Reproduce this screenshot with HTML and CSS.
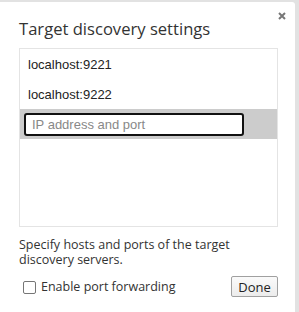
FILE: index.html
```html
<!DOCTYPE html>
<html>
<head>
    <title>Target discovery settings</title>
    <link rel="stylesheet" href="styles.css">
</head>
<body>
    <div class="dialog">
        <span class="close-btn">
            <svg width="8" height="8" viewBox="0 0 8 8"><path d="M1 1L7 7M7 1L1 7" stroke="#777" stroke-width="2"/></svg>
        </span>
        <h2 class="dialog-title">Target discovery settings</h2>

        <div class="host-list">
            <div class="host-item">localhost:9221</div>
            <div class="host-item">localhost:9222</div>
            <div class="host-item selected">
                <input type="text" class="host-input" placeholder="IP address and port">
            </div>
        </div>

        <p class="dialog-note">Specify hosts and ports of the target discovery servers.</p>

        <div class="dialog-footer">
            <label class="check-label"><span class="check-box"></span>Enable port forwarding</label>
            <button class="done-btn">Done</button>
        </div>
    </div>
</body>
</html>
```

FILE: styles.css
```css
body {
    margin: 0;
    padding: 0;
    background-color: #e2e2e2;
    height: 312px;
    overflow: hidden;
    font-family: 'Open Sans', sans-serif;
}
.dialog {
    position: relative;
    box-sizing: border-box;
    width: 295px;
    height: 310px;
    margin-top: 2px;
    padding: 15px 17px 0 19px;
    background-color: white;
    border-radius: 0 3px 0 0;
    display: flex;
    flex-direction: column;
}
.close-btn {
    position: absolute;
    top: 10px;
    right: 9px;
    line-height: 0;
}
.dialog-title {
    margin: 0;
    font-size: 16.6px;
    font-weight: normal;
    line-height: 24px;
    color: #333;
}
.host-list {
    margin-top: 7px;
    height: 179px;
    box-sizing: border-box;
    border: 1px solid #e4e4e4;
    font-family: 'Liberation Sans', Arial, sans-serif;
    font-size: 13px;
    color: #222;
}
.host-item {
    height: 30px;
    display: flex;
    align-items: center;
    padding-left: 8px;
}
.host-item.selected {
    background-color: #cccccc;
    padding-left: 4px;
}
.host-input {
    box-sizing: border-box;
    width: 220px;
    height: 23px;
    margin: 0;
    padding: 0 6px;
    border: 2px solid #111;
    border-radius: 3px;
    outline: none;
    font-family: 'Liberation Sans', Arial, sans-serif;
    font-size: 13px;
    background-color: white;
}
.host-input::placeholder {
    color: #888;
}
.dialog-note {
    margin: 10px 0 0 0;
    font-size: 12.5px;
    line-height: 15px;
    color: #333;
}
.dialog-footer {
    display: flex;
    justify-content: space-between;
    align-items: center;
    margin-top: 9px;
}
.check-label {
    display: flex;
    align-items: center;
    margin-left: 4px;
    font-size: 12.5px;
    color: #333;
}
.check-box {
    width: 11px;
    height: 11px;
    border: 1px solid #767676;
    border-radius: 2px;
    margin-right: 5px;
    margin-top: 2px;
}
.done-btn {
    width: 47px;
    height: 21px;
    padding: 0;
    border: 1px solid #a0a0a0;
    border-radius: 2px;
    background: linear-gradient(#fafafa, #ececec);
    font-family: 'Open Sans', sans-serif;
    font-size: 13px;
    color: #222;
}
```
